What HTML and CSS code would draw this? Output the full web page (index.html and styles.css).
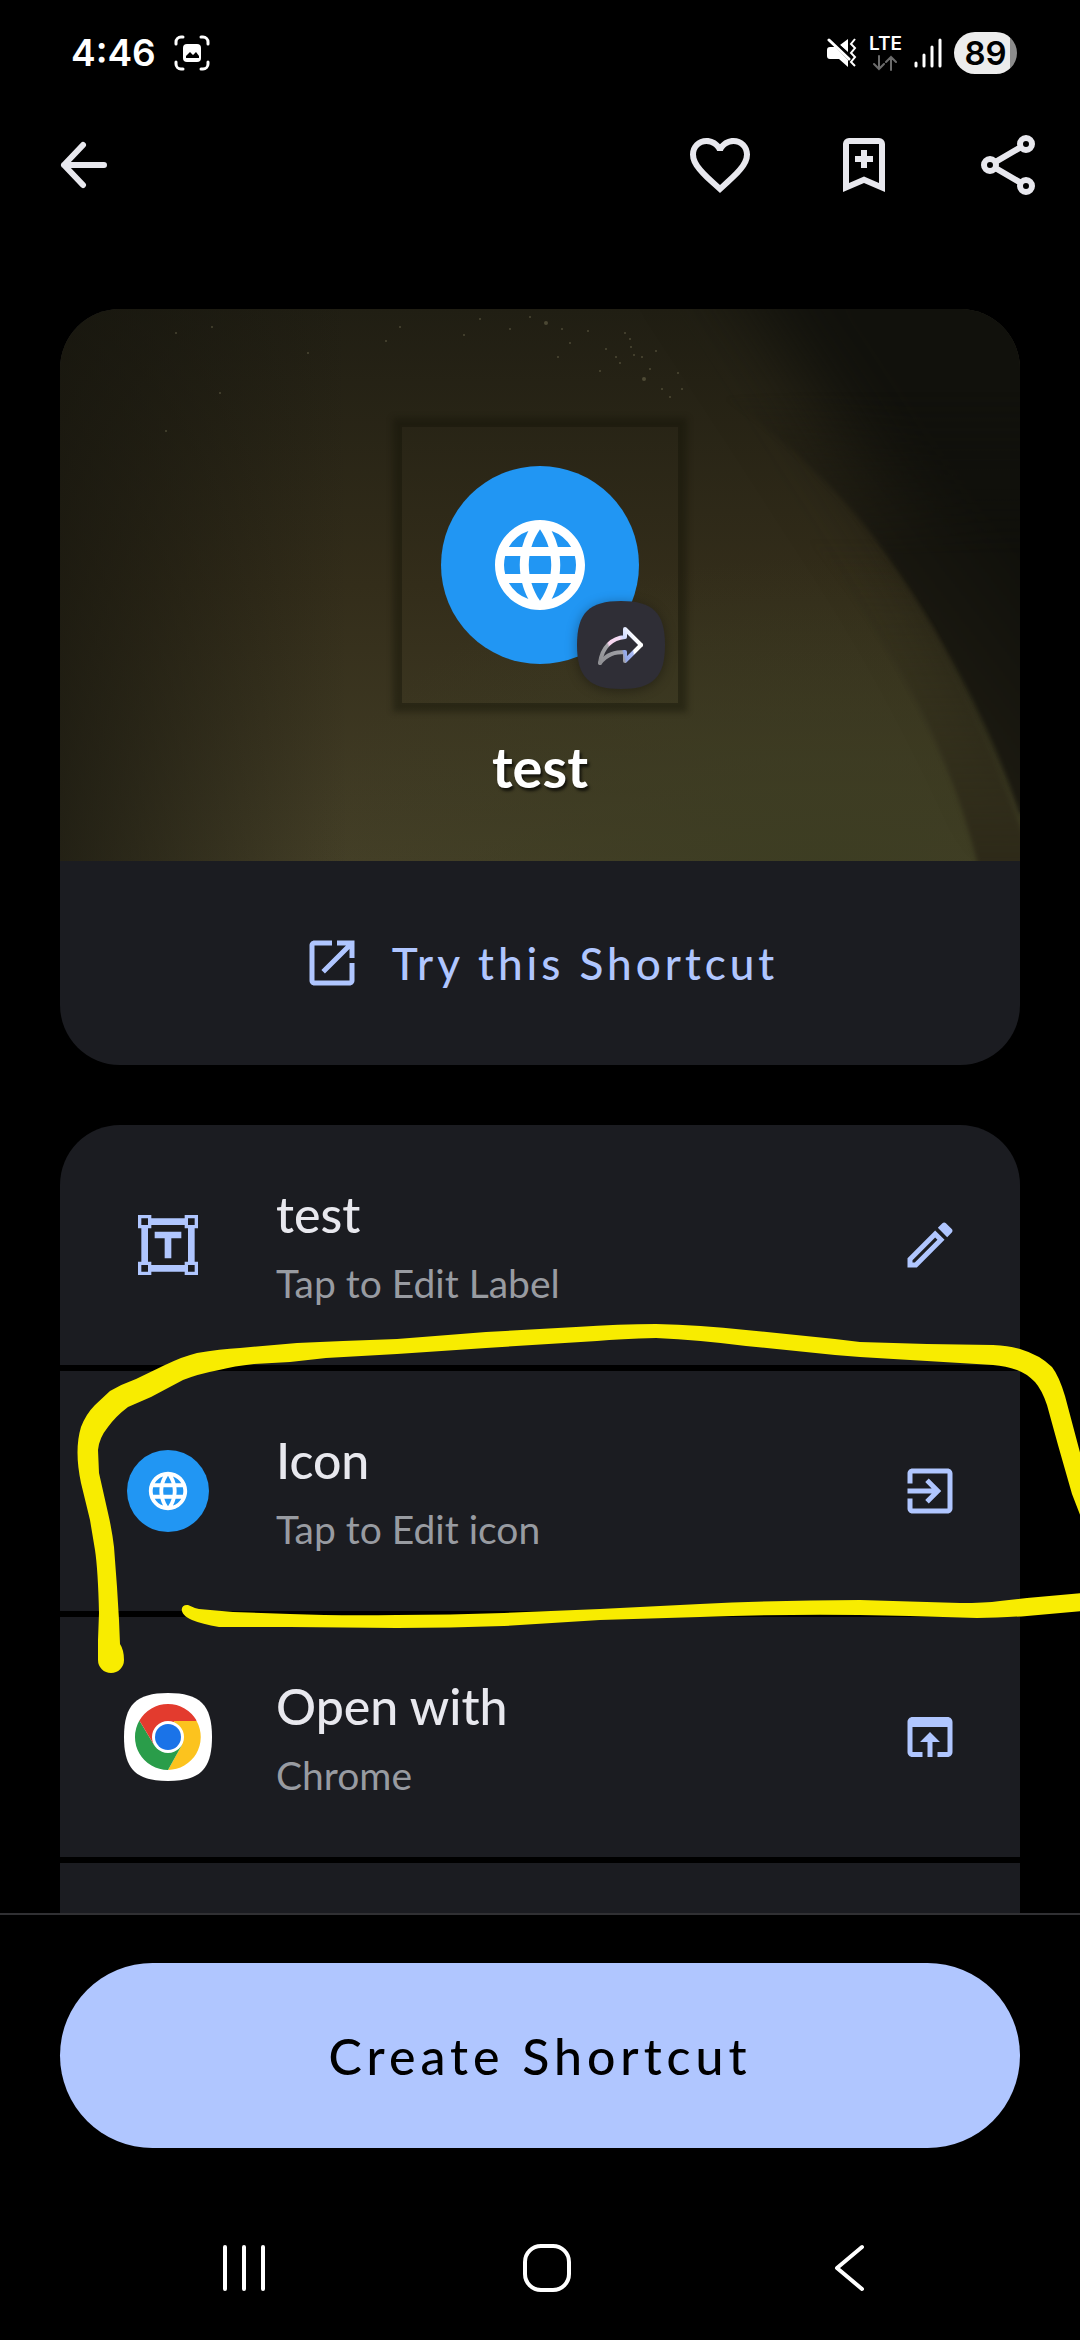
FILE: index.html
```html
<!DOCTYPE html>
<html lang="en">
<head>
<meta charset="utf-8">
<meta name="viewport" content="width=device-width, initial-scale=1">
<title>Create Shortcut</title>
<link rel="stylesheet" href="styles.css">
</head>
<body>
<svg class="defs" width="0" height="0" aria-hidden="true">
  <symbol id="globe" viewBox="0 0 24 24">
    <path fill="currentColor" d="M11.99 2C6.47 2 2 6.48 2 12s4.47 10 9.99 10C17.52 22 22 17.52 22 12S17.52 2 11.99 2zm6.93 6h-2.95a15.65 15.65 0 0 0-1.38-3.56A8.03 8.03 0 0 1 18.92 8zM12 4.04c.83 1.2 1.48 2.53 1.91 3.96h-3.82c.43-1.43 1.08-2.76 1.91-3.96zM4.26 14C4.1 13.36 4 12.69 4 12s.1-1.36.26-2h3.38c-.08.66-.14 1.32-.14 2s.06 1.34.14 2H4.26zm.82 2h2.95c.32 1.25.78 2.45 1.38 3.56A7.99 7.99 0 0 1 5.08 16zm2.95-8H5.08a7.99 7.99 0 0 1 4.33-3.56A15.65 15.65 0 0 0 8.03 8zM12 19.96c-.83-1.2-1.48-2.53-1.91-3.96h3.82c-.43 1.43-1.08 2.76-1.91 3.96zM14.34 14H9.66c-.09-.66-.16-1.32-.16-2s.07-1.35.16-2h4.68c.09.65.16 1.32.16 2s-.07 1.34-.16 2zm.25 5.56c.6-1.11 1.06-2.31 1.38-3.56h2.95a8.03 8.03 0 0 1-4.33 3.56zM16.36 14c.08-.66.14-1.32.14-2s-.06-1.34-.14-2h3.38c.16.64.26 1.31.26 2s-.1 1.36-.26 2h-3.38z"/>
  </symbol>
</svg>

<div class="status">
  <div class="status-group status-left">
    <span class="clock">4:46</span>
    <svg width="36" height="36" viewBox="0 0 36 36" aria-hidden="true">
      <g fill="none" stroke="#fff" stroke-width="3" stroke-linecap="round">
        <path d="M2 9V7a5 5 0 0 1 5-5h2M27 2h2a5 5 0 0 1 5 5v2M34 27v2a5 5 0 0 1-5 5h-2M9 34H7a5 5 0 0 1-5-5v-2"/>
      </g>
      <rect x="9" y="9" width="18" height="18" rx="4" fill="#fff"/>
      <path d="M12 23v-2l4-4 3 3 3-3 3 4v2z" fill="#000"/>
    </svg>
  </div>
  <div class="status-group status-right">
    <svg width="30" height="30" viewBox="0 0 30 30" aria-hidden="true">
      <path fill="#fff" d="M21 1v13L13 7zM3 9h5l13 13v7l-9-8H3c-2 0-3-1-3-3v-6c0-2 1-3 3-3z"/>
      <path d="M3 1l20 19" stroke="#000" stroke-width="5"/>
      <path d="M2 2l20 19" stroke="#fff" stroke-width="3" stroke-linecap="round"/>
      <path d="M28 1l-4 5 4 4-4 5 4 4-4 5 4 4" fill="none" stroke="#fff" stroke-width="2"/>
    </svg>
    <div class="lte">
      <span>LTE</span>
      <svg width="24" height="16" viewBox="0 0 24 16" fill="none" stroke="#6c6c6c" stroke-width="2" stroke-linecap="round" aria-hidden="true">
        <path d="M6 1v13M1 9l5 5 5-5M18 15V2M13 7l5-5 5 5"/>
      </svg>
    </div>
    <svg width="28" height="30" viewBox="0 0 28 30" stroke="#fff" stroke-width="3" stroke-linecap="round" aria-hidden="true">
      <path d="M2 25v3M10 17v11M18 9v19M26 2v26"/>
    </svg>
    <span class="battery">89</span>
  </div>
</div>

<header class="appbar">
  <button class="icon-btn" aria-label="Back">
    <svg width="48" height="48" viewBox="0 0 48 48" fill="none" stroke="currentColor" stroke-width="6" stroke-linecap="round" stroke-linejoin="round">
      <path d="M44 24H4M23 4L4 24l19 20"/>
    </svg>
  </button>
  <div class="actions">
    <button class="icon-btn" aria-label="Favorite">
      <svg width="72" height="72" viewBox="0 0 24 24" fill="currentColor"><path d="M16.500 3c-1.740 0-3.410.81-4.500 2.090C10.910 3.810 9.240 3 7.500 3 4.420 3 2 5.420 2 8.500c0 3.780 3.400 6.860 8.550 11.540L12 21.350l1.450-1.320C18.600 15.360 22 12.280 22 8.500 22 5.420 19.580 3 16.500 3zm-4.400 15.550-.1.1-.1-.1C7.140 14.240 4 11.390 4 8.500 4 6.500 5.500 5 7.500 5c1.540 0 3.040.99 3.570 2.360h1.870C13.460 5.990 14.960 5 16.500 5c2 0 3.500 1.500 3.500 3.500 0 2.890-3.140 5.740-7.900 10.050z"/></svg>
    </button>
    <button class="icon-btn" aria-label="Add bookmark">
      <svg width="72" height="72" viewBox="0 0 24 24" fill="currentColor"><path fill-rule="evenodd" d="M5 21V5a2 2 0 0 1 2-2h10a2 2 0 0 1 2 2v16l-7-3zM7 5v13l5-2.150L17 18V5z"/><path d="M11 7h2v2h2v2h-2v2h-2v-2H9V9h2z"/></svg>
    </button>
    <button class="icon-btn" aria-label="Share">
      <svg width="72" height="72" viewBox="0 0 24 24" fill="none" stroke="currentColor" stroke-width="2"><circle cx="18" cy="5" r="2"/><circle cx="6" cy="12" r="2"/><circle cx="18" cy="19" r="2"/><path d="M8 10.900l8.200-4.800M8 13.100l8.200 4.800"/></svg>
    </button>
  </div>
</header>

<main class="content">
  <section class="card preview">
    <div class="hero">
      <svg class="wallpaper" viewBox="0 0 960 552" preserveAspectRatio="xMidYMid slice" aria-hidden="true">
        <defs>
          <linearGradient id="base" x1="0" y1="0" x2="0" y2="1">
            <stop offset="0" stop-color="#201e13"/><stop offset=".5" stop-color="#332d1a"/><stop offset="1" stop-color="#443f27"/>
          </linearGradient>
          <linearGradient id="side" x1="0" y1="0" x2="1" y2="0">
            <stop offset="0" stop-color="#15140d" stop-opacity=".7"/><stop offset=".3" stop-color="#15140d" stop-opacity="0"/>
          </linearGradient>
          <radialGradient id="green" cx=".8" cy="1" r=".55">
            <stop offset="0" stop-color="#3c3d22" stop-opacity=".9"/><stop offset="1" stop-color="#3c3d22" stop-opacity="0"/>
          </radialGradient>
          <linearGradient id="space" gradientUnits="userSpaceOnUse" x1="770" y1="260" x2="900" y2="160">
            <stop offset="0" stop-color="#1c1a11"/><stop offset="1" stop-color="#10100b"/>
          </linearGradient>
          <linearGradient id="fade" x1="0" y1="0" x2="0" y2="1">
            <stop offset=".15" stop-color="#000"/><stop offset=".45" stop-color="#fff"/>
          </linearGradient>
          <mask id="lower"><rect width="960" height="552" fill="url(#fade)"/></mask>
          <linearGradient id="rim" gradientUnits="userSpaceOnUse" x1="0" y1="230" x2="0" y2="552">
            <stop offset="0" stop-color="#2e2a19" stop-opacity="0"/><stop offset="1" stop-color="#2e2a19"/>
          </linearGradient>
          <filter id="soft" color-interpolation-filters="sRGB" x="-30%" y="-30%" width="160%" height="160%"><feGaussianBlur stdDeviation="40"/></filter>
          <filter id="edge" color-interpolation-filters="sRGB" x="-20%" y="-20%" width="140%" height="140%"><feGaussianBlur stdDeviation="2"/></filter>
        </defs>
        <rect width="960" height="552" fill="url(#base)"/>
        <rect width="960" height="552" fill="url(#green)"/>
        <rect width="960" height="552" fill="url(#side)"/>
        <path d="M640-90Q740 60 810 170 900 300 985 490H1100V-90z" fill="#11110c" filter="url(#soft)"/>
        <g mask="url(#lower)">
          <path d="M667 89Q723 128 773 180 823 232 873 318 930 415 960 505H990V60z" fill="url(#space)" filter="url(#edge)"/>
        </g>
        <path d="M740 220Q872 370 919 560H975Q950 480 873 320 820 235 780 190z" fill="url(#rim)" filter="url(#edge)"/>
        <g fill="#8b8664" opacity=".4">
          <circle cx="470" cy="8" r="1"/><circle cx="486" cy="14" r="2"/><circle cx="502" cy="20" r="1"/><circle cx="510" cy="34" r="1"/><circle cx="528" cy="22" r="1"/><circle cx="546" cy="40" r="1"/><circle cx="560" cy="54" r="1"/><circle cx="574" cy="46" r="1"/><circle cx="584" cy="70" r="2"/><circle cx="540" cy="62" r="1"/><circle cx="450" cy="20" r="1"/><circle cx="420" cy="10" r="1"/><circle cx="404" cy="26" r="1"/><circle cx="340" cy="18" r="1"/><circle cx="326" cy="32" r="1"/><circle cx="248" cy="44" r="1"/><circle cx="116" cy="24" r="1"/><circle cx="152" cy="18" r="1"/><circle cx="610" cy="88" r="1"/><circle cx="498" cy="48" r="1"/><circle cx="106" cy="122" r="1"/><circle cx="590" cy="60" r="1"/><circle cx="570" cy="30" r="1"/><circle cx="160" cy="84" r="1"/><circle cx="565" cy="24" r="1"/><circle cx="571" cy="38" r="1"/><circle cx="556" cy="48" r="1"/><circle cx="596" cy="42" r="1"/><circle cx="618" cy="64" r="1"/><circle cx="582" cy="48" r="1"/><circle cx="602" cy="80" r="1"/><circle cx="622" cy="80" r="1"/>
        </g>
      </svg>
      <div class="tile">
        <span class="disc disc-lg"><svg width="108" height="108"><use href="#globe"/></svg></span>
        <svg class="badge" width="88" height="88" viewBox="0 0 88 88" aria-hidden="true">
          <defs>
            <linearGradient id="arrow" gradientUnits="userSpaceOnUse" x1="22" y1="58" x2="66" y2="36">
              <stop offset="0" stop-color="#909094"/><stop offset=".28" stop-color="#a6a6aa"/><stop offset=".32" stop-color="#f8d4ee"/><stop offset=".56" stop-color="#f4dcf4"/><stop offset=".64" stop-color="#cdd8ff"/><stop offset=".86" stop-color="#fff"/>
            </linearGradient>
            <linearGradient id="tail" gradientUnits="userSpaceOnUse" x1="22" y1="60" x2="66" y2="48">
              <stop offset="0" stop-color="#909094"/><stop offset=".54" stop-color="#a0a0a6"/><stop offset=".58" stop-color="#93a8ea"/><stop offset=".76" stop-color="#a9baf4"/><stop offset=".8" stop-color="#fff"/>
            </linearGradient>
          </defs>
          <path d="M44 0C76 0 88 12 88 44S76 88 44 88 0 76 0 44 12 0 44 0z" fill="#2f2e36"/>
          <g fill="none" stroke-width="4" stroke-linecap="round" stroke-linejoin="round">
            <path stroke="url(#tail)" d="M23 62C30 53 38 51 48 51V60L64 44"/>
            <path stroke="url(#arrow)" d="M23 62C25 46 35 37 48 36V28L64 44"/>
          </g>
        </svg>
      </div>
      <p class="hero-label">test</p>
    </div>
    <button class="try">
      <svg width="60" height="60" viewBox="0 0 24 24" fill="currentColor" aria-hidden="true"><path d="M19 19H5V5h7V3H5c-1.110 0-2 .9-2 2v14c0 1.100.89 2 2 2h14c1.100 0 2-.9 2-2v-7h-2v7zM14 3v2h3.590l-9.830 9.830 1.410 1.410L19 6.410V10h2V3h-7z"/></svg>
      <span>Try this Shortcut</span>
    </button>
  </section>

  <ul class="card rows">
    <li><button class="row">
      <span class="lead"><svg width="60" height="60" viewBox="0 0 18 18" fill="currentColor"><path fill-rule="evenodd" d="M0 0h4v1h10V0h4v4h-1v10h1v4h-4v-1H4v1H0v-4h1V4H0zM1 1v2h2V1zM15 1v2h2V1zM1 15v2h2v-2zM15 15v2h2v-2zM4 3v1H3v10h1v1h10v-1h1V4h-1V3z"/><path d="M5 5h8v2h-3v6H8V7H5z"/></svg></span>
      <span class="text"><span class="title">test</span><span class="sub">Tap to Edit Label</span></span>
      <svg width="60" height="60" viewBox="0 0 24 24" fill="currentColor"><path d="M14.060 9.020l.92.92L5.920 19H5v-.92l9.060-9.060M17.660 3c-.25 0-.51.1-.7.29l-1.830 1.830 3.750 3.750 1.830-1.830c.39-.39.39-1.020 0-1.410l-2.340-2.340c-.2-.2-.45-.29-.71-.29zm-3.600 3.190L3 17.250V21h3.750L17.810 9.940l-3.750-3.750z"/></svg>
    </button></li>
    <li><button class="row">
      <span class="lead"><span class="disc disc-sm"><svg width="46" height="46"><use href="#globe"/></svg></span></span>
      <span class="text"><span class="title">Icon</span><span class="sub">Tap to Edit icon</span></span>
      <svg width="60" height="60" viewBox="0 0 24 24" fill="currentColor"><path d="M10.090 15.590L11.500 17l5-5-5-5-1.410 1.410L12.670 11H3v2h9.670l-2.580 2.590zM19 3H5c-1.110 0-2 .9-2 2v4h2V5h14v14H5v-4H3v4c0 1.100.89 2 2 2h14c1.100 0 2-.9 2-2V5c0-1.100-.9-2-2-2z"/></svg>
    </button></li>
    <li><button class="row">
      <span class="lead"><svg width="88" height="88" viewBox="0 0 88 88">
        <path d="M44 0C76 0 88 12 88 44S76 88 44 88 0 76 0 44 12 0 44 0z" fill="#fff"/>
        <path d="M44 44L15.400 27.500A33 33 0 0 1 72.600 27.500z" fill="#e33b2e"/>
        <path d="M44 28H72.600A33 33 0 0 1 44 77L57.900 52z" fill="#fcc31e"/>
        <path d="M15.400 27.500A33 33 0 0 0 44 77L57.900 52 44 44 30.100 52z" fill="#2a9d4a"/>
        <path d="M15.400 27.500L30.100 52 44 44 50 28z" fill="#e33b2e"/>
        <circle cx="44" cy="44" r="16" fill="#fff"/><circle cx="44" cy="44" r="13" fill="#1a73e8"/>
      </svg></span>
      <span class="text"><span class="title">Open with</span><span class="sub">Chrome</span></span>
      <svg width="60" height="60" viewBox="0 0 24 24" fill="currentColor"><path d="M19 4H5c-1.110 0-2 .9-2 2v12c0 1.100.89 2 2 2h4v-2H5V8h14v10h-4v2h4c1.100 0 2-.9 2-2V6c0-1.100-.89-2-2-2zm-7 6l-4 4h3v6h2v-6h3l-4-4z"/></svg>
    </button></li>
    <li class="row"></li>
  </ul>
</main>

<footer class="footer">
  <button class="create">Create Shortcut</button>
</footer>

<nav class="sysnav">
  <button class="icon-btn" aria-label="Recents"><svg width="48" height="48" viewBox="0 0 48 48" stroke="#fff" stroke-width="4" stroke-linecap="round"><path d="M5 3v42M24 3v42M43 3v42"/></svg></button>
  <button class="icon-btn" aria-label="Home"><svg width="48" height="48" viewBox="0 0 48 48" fill="none" stroke="#fff" stroke-width="4"><rect x="2" y="2" width="44" height="44" rx="16"/></svg></button>
  <button class="icon-btn" aria-label="Back"><svg width="48" height="48" viewBox="0 0 48 48" fill="none" stroke="#fff" stroke-width="4" stroke-linecap="round" stroke-linejoin="round"><path d="M37 3L12 24l25 21"/></svg></button>
</nav>

<svg class="ink" viewBox="0 0 1080 2340" aria-hidden="true">
  <g fill="#f8ec00">
    <path d="M98 1660L98 1640 99 1613Q98 1570 95 1550L90 1520 81 1483Q74 1450 81 1427 86 1414 95 1405L110 1391Q122 1384 136 1379L165 1365Q184 1356 197 1353 220 1349 240 1348L297 1343 343 1341 397 1339 486 1332 576 1327Q620 1324 656 1324 700 1325 746 1330L835 1339 860 1342 927 1344 993 1345Q1010 1346 1020 1349 1040 1355 1052 1367 1059 1376 1065 1396L1082 1460V1520L1072 1494 1058 1445 1047 1405Q1042 1390 1035 1382 1026 1373 1017 1370 1006 1366 993 1365L927 1361 860 1357 835 1355 746 1346Q700 1340 656 1338 620 1339 597 1341L486 1348 397 1354 326 1358 290 1362 254 1364Q234 1366 219 1370 198 1374 183 1380L151 1397 128 1407Q116 1416 108 1427 99 1438 98 1450L99 1473 108 1513Q112 1530 114 1547L117 1587 119 1620 120 1644Q124 1650 124 1660A13 13 0 0 1 98 1660z"/>
    <path d="M188 1605Q194 1608 199 1609L233 1612 290 1614Q340 1616 397 1615 450 1615 504 1613L600 1609 700 1604Q780 1600 860 1600L893 1601 960 1603Q985 1603 1000 1601L1027 1598 1082 1593V1611L1027 1616Q1000 1618 977 1618L910 1616 860 1615Q780 1614 700 1617L600 1620 504 1626Q450 1628 397 1628L290 1627 219 1627Q202 1624 192 1620C178 1614 180 1604 188 1605z"/>
  </g>
</svg>
</body>
</html>
```
FILE: styles.css
```css
* { box-sizing: border-box; }

body {
  position: relative;
  display: flex;
  flex-direction: column;
  height: 100vh;
  margin: 0;
  overflow: hidden;
  background: #000;
  color: #e8e8ee;
  font-family: Lato, "Liberation Sans", sans-serif;
}

.defs { position: absolute; }
svg { display: block; flex: none; }

button {
  padding: 0;
  border: 0;
  background: none;
  color: inherit;
  font: inherit;
  cursor: pointer;
}

/* Status bar */
.status {
  display: flex;
  justify-content: space-between;
  align-items: center;
  height: 106px;
  padding: 0 63px 0 71px;
  color: #fff;
  font-family: Inter, "Liberation Sans", sans-serif;
  font-weight: 600;
}
.status-group { display: flex; align-items: center; }
.status-left { gap: 18px; }
.status-right { gap: 12px; }
.clock { font-size: 37px; line-height: 42px; }
.lte {
  display: flex;
  flex-direction: column;
  align-items: center;
  gap: 2px;
  font-size: 19px;
  font-weight: 600;
  line-height: 18px;
}
.battery {
  width: 63px;
  border-radius: 21px;
  background: linear-gradient(90deg, #ececec 56px, #8c8c8c 56px);
  color: #000;
  font-size: 33px;
  line-height: 42px;
  text-align: center;
}

/* App bar */
.appbar {
  display: flex;
  justify-content: space-between;
  align-items: center;
  height: 118px;
  padding: 0 36px 0 60px;
}
.actions { display: flex; gap: 72px; }

/* Scrolling content */
.content {
  flex: 1;
  min-height: 0;
  padding: 85px 60px 0;
  overflow: hidden;
}
.card { overflow: hidden; border-radius: 60px; }
.preview { background: #1b1c21; }

.hero {
  position: relative;
  display: flex;
  flex-direction: column;
  align-items: center;
  gap: 32px;
  height: 552px;
  padding-top: 118px;
}
.wallpaper {
  position: absolute;
  inset: 0;
  width: 100%;
  height: 100%;
}
.tile {
  position: relative;
  display: grid;
  place-items: center;
  width: 276px;
  height: 276px;
  box-shadow: 0 0 6px 9px rgba(20, 18, 8, .42);
}
.disc {
  display: grid;
  place-items: center;
  border-radius: 50%;
  background: #2196f3;
  color: #fff;
}
.disc-lg { width: 198px; height: 198px; }
.disc-sm { width: 82px; height: 82px; }
.badge {
  position: absolute;
  right: 13px;
  bottom: 14px;
  filter: drop-shadow(0 2px 6px rgba(0, 0, 0, .35));
}
.hero-label {
  position: relative;
  margin: 0;
  color: #fff;
  font-size: 56px;
  font-weight: 700;
  line-height: 64px;
  text-shadow: 2px 3px 3px rgba(0, 0, 0, .7);
}
.try {
  display: flex;
  justify-content: center;
  align-items: center;
  gap: 30px;
  width: 100%;
  height: 204px;
  color: #b0c6ff;
  font-size: 44px;
  font-weight: 500;
  letter-spacing: 4px;
}

/* Settings rows */
.rows {
  display: flex;
  flex-direction: column;
  gap: 6px;
  margin: 60px 0 0;
  padding: 0;
  list-style: none;
}
.row {
  display: flex;
  align-items: center;
  gap: 64px;
  width: 100%;
  min-height: 240px;
  padding: 0 60px 0 64px;
  background: #1b1c21;
  color: #b0c6ff;
  text-align: left;
}
.lead { display: grid; place-items: center; width: 88px; }
.text {
  display: flex;
  flex: 1;
  flex-direction: column;
  padding-top: 4px;
}
.title {
  color: #e8e8ee;
  font-size: 50px;
  font-weight: 500;
  line-height: 72px;
}
.sub {
  color: #989ba1;
  font-size: 39px;
  line-height: 66px;
}

/* Bottom action */
.footer {
  padding: 48px 60px;
  border-top: 2px solid #303033;
}
.create {
  display: block;
  width: 100%;
  height: 185px;
  border-radius: 93px;
  background: #b0c6ff;
  color: #000;
  font-size: 50px;
  font-weight: 500;
  letter-spacing: 5px;
}

/* System navigation */
.sysnav {
  display: flex;
  justify-content: space-between;
  align-items: center;
  height: 144px;
  padding: 0 207px 0 220px;
}

/* Hand-drawn marker over the page */
.ink {
  position: absolute;
  top: 0;
  left: 0;
  width: 100%;
  pointer-events: none;
}
```
